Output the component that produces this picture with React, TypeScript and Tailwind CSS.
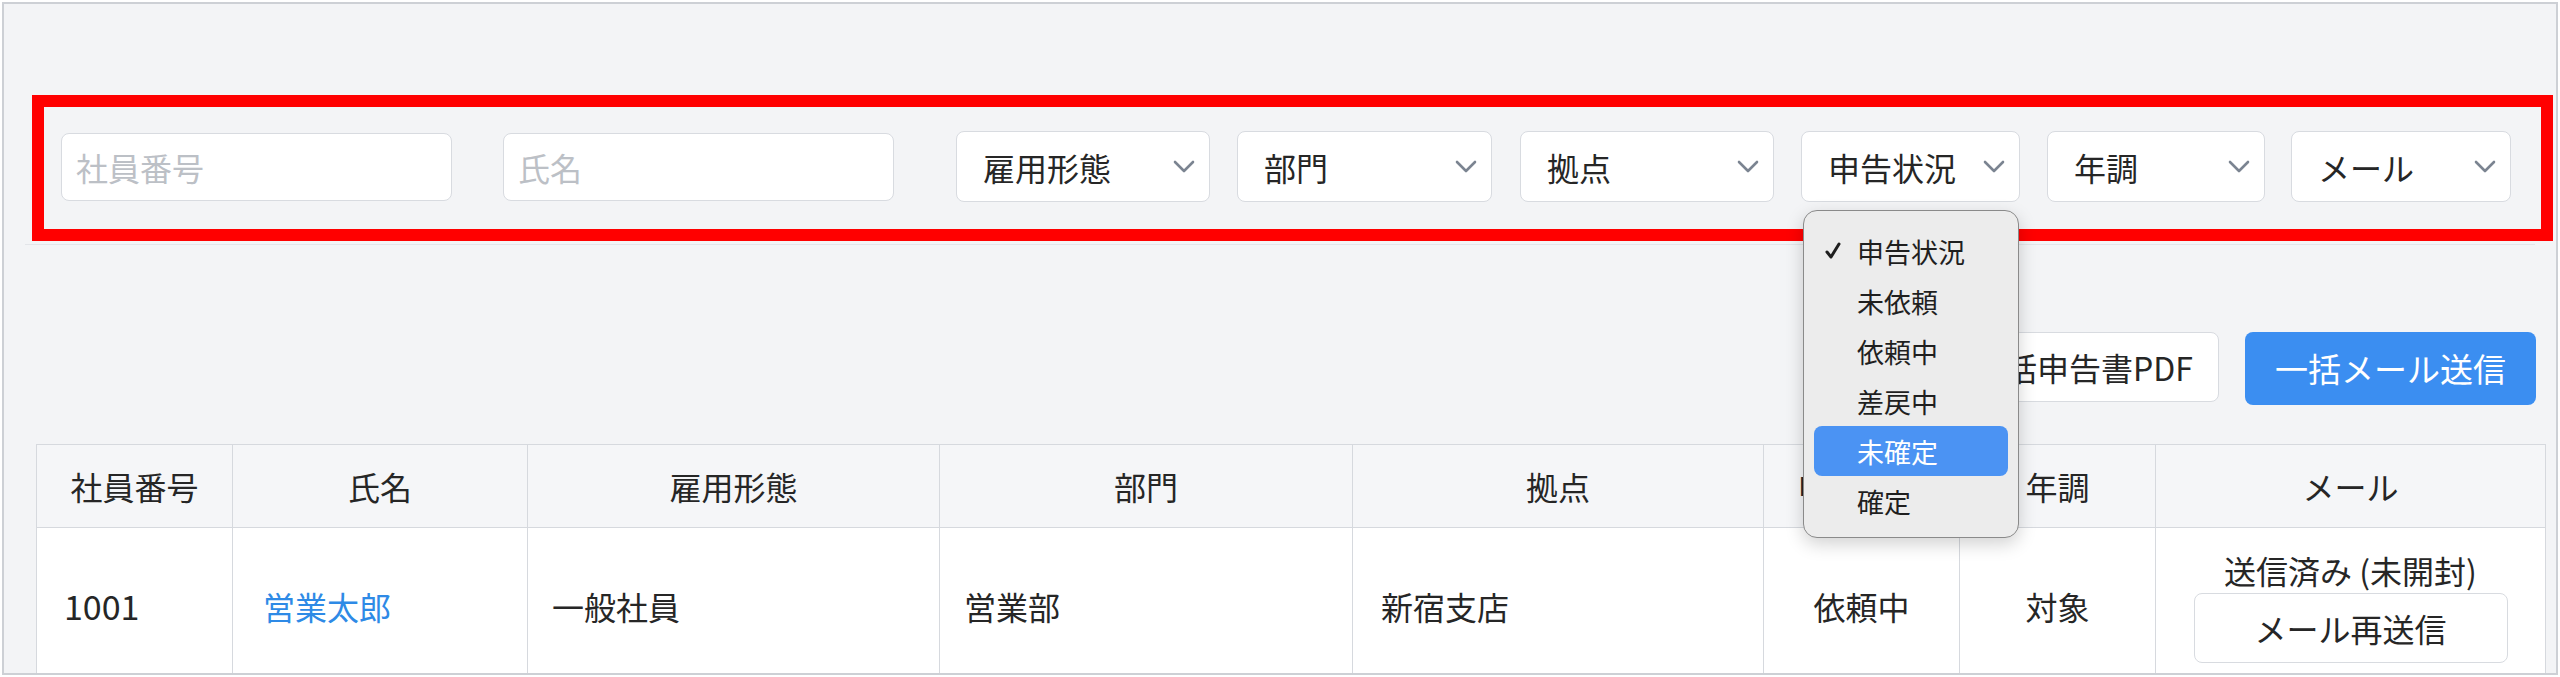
import React from "react";

// ---------------------------------------------------------------------------
// Small pieces
// ---------------------------------------------------------------------------

function Chevron() {
  return (
    <svg width="22" height="14" viewBox="0 0 22 14" fill="none" className="shrink-0">
      <polyline
        points="2,2 11,11 20,2"
        stroke="#7b8491"
        strokeWidth="2.6"
        strokeLinecap="round"
        strokeLinejoin="round"
      />
    </svg>
  );
}

function FilterInput({ placeholder, className }: { placeholder: string; className: string }) {
  return (
    <div
      className={`flex h-[68px] w-[391px] items-center rounded-[8px] border border-[#d8dbe0] bg-white pl-[14px] text-[32px] text-[#bcc0c6] ${className}`}
    >
      {placeholder}
    </div>
  );
}

function FilterSelect({ label, width, className }: { label: string; width: string; className: string }) {
  return (
    <div
      className={`flex h-[71px] items-center justify-between rounded-[8px] border border-[#d8dbe0] bg-white pl-[26px] pr-[14px] text-[32px] text-[#262626] ${width} ${className}`}
    >
      <span>{label}</span>
      <Chevron />
    </div>
  );
}

const STATUS_OPTIONS = ["申告状況", "未依頼", "依頼中", "差戻中", "未確定", "確定"];

function StatusMenu() {
  return (
    <div className="absolute left-[1799px] top-[206px] h-[328px] w-[216px] rounded-[14px] border border-[#8a8a8a] bg-[#ececec] pt-[15px] text-[27px] text-[#1f1f1f] shadow-[0_6px_18px_rgba(0,0,0,0.18)]">
      {STATUS_OPTIONS.map((option, index) => {
        const active = option === "未確定";
        return (
          <div
            key={option}
            className={`mx-[10px] flex h-[50px] items-center rounded-[8px] pl-[11px] ${
              active ? "bg-[#4b93f3] text-white" : ""
            }`}
          >
            <span className="flex w-[32px] items-center">
              {index === 0 && (
                <svg width="16" height="18" viewBox="0 0 16 18" fill="none">
                  <polyline
                    points="2,10 6,15 14,2"
                    stroke="#1f1f1f"
                    strokeWidth="3"
                    strokeLinecap="round"
                    strokeLinejoin="round"
                  />
                </svg>
              )}
            </span>
            <span className="leading-none">{option}</span>
          </div>
        );
      })}
    </div>
  );
}

// ---------------------------------------------------------------------------
// Page
// ---------------------------------------------------------------------------

const COLUMNS = [
  { label: "社員番号", width: "w-[196px]" },
  { label: "氏名", width: "w-[295px]" },
  { label: "雇用形態", width: "w-[412px]" },
  { label: "部門", width: "w-[413px]" },
  { label: "拠点", width: "w-[411px]" },
  { label: "申告状況", width: "w-[196px]" },
  { label: "年調", width: "w-[196px]" },
  { label: "メール", width: "w-[390px]" },
];

export default function App() {
  return (
    <div className="h-[677px] w-[2560px] overflow-hidden bg-white p-[2px] font-['Noto_Sans_CJK_JP',sans-serif]">
      <div className="relative h-full w-full overflow-hidden border-2 border-[#cdd0d5] bg-[#f3f4f6]">
        {/* Filter bar */}
        <div className="mx-[21px] mt-[85px] flex h-[156px] items-center border-b border-[#e3e5e9] pl-[36px]">
          <FilterInput placeholder="社員番号" className="" />
          <FilterInput placeholder="氏名" className="ml-[51px]" />
          <FilterSelect label="雇用形態" width="w-[254px]" className="ml-[62px]" />
          <FilterSelect label="部門" width="w-[255px]" className="ml-[27px]" />
          <FilterSelect label="拠点" width="w-[254px]" className="ml-[28px]" />
          <FilterSelect label="申告状況" width="w-[219px]" className="ml-[27px]" />
          <FilterSelect label="年調" width="w-[218px]" className="ml-[27px]" />
          <FilterSelect label="メール" width="w-[220px]" className="ml-[26px]" />
        </div>

        {/* Bulk actions */}
        <div className="mt-[87px] flex justify-end gap-[26px] pr-[20px]">
          <button
            type="button"
            className="flex h-[70px] w-[272px] items-center justify-center rounded-[8px] border border-[#d8dbe0] bg-white text-[32px] text-[#262626]"
          >
            一括申告書PDF
          </button>
          <button
            type="button"
            className="flex h-[73px] w-[291px] items-center justify-center rounded-[8px] bg-[#3b8ef1] text-[33px] text-white"
          >
            一括メール送信
          </button>
        </div>

        {/* Table */}
        <table className="ml-[32px] mt-[39px] table-fixed border-collapse text-[32px] text-[#262626]">
          <thead>
            <tr className="h-[83px] bg-[#f5f6f8]">
              {COLUMNS.map((col) => (
                <th key={col.label} className={`${col.width} border border-[#d6d9de] font-normal`}>
                  {col.label}
                </th>
              ))}
            </tr>
          </thead>
          <tbody>
            <tr className="h-[156px] bg-white">
              <td className="border border-[#d6d9de] pl-[27px] text-[34px]">1001</td>
              <td className="border border-[#d6d9de] pl-[30px] text-[#2e8ae6]">営業太郎</td>
              <td className="border border-[#d6d9de] pl-[24px]">一般社員</td>
              <td className="border border-[#d6d9de] pl-[24px]">営業部</td>
              <td className="border border-[#d6d9de] pl-[28px]">新宿支店</td>
              <td className="border border-[#d6d9de] text-center">依頼中</td>
              <td className="border border-[#d6d9de] text-center">対象</td>
              <td className="border border-[#d6d9de]">
                <div className="flex flex-col items-center">
                  <span className="leading-[44px]">送信済み (未開封)</span>
                  <button
                    type="button"
                    className="mt-[1px] flex h-[70px] w-[314px] items-center justify-center rounded-[8px] border border-[#d8dbe0] bg-white text-[32px] text-[#262626]"
                  >
                    メール再送信
                  </button>
                </div>
              </td>
            </tr>
          </tbody>
        </table>

        {/* Annotation box over the filter bar */}
        <div className="absolute left-[28px] top-[91px] h-[146px] w-[2521px] border-[12px] border-[#ff0000]" />

        {/* Native select menu, open */}
        <StatusMenu />
      </div>
    </div>
  );
}
